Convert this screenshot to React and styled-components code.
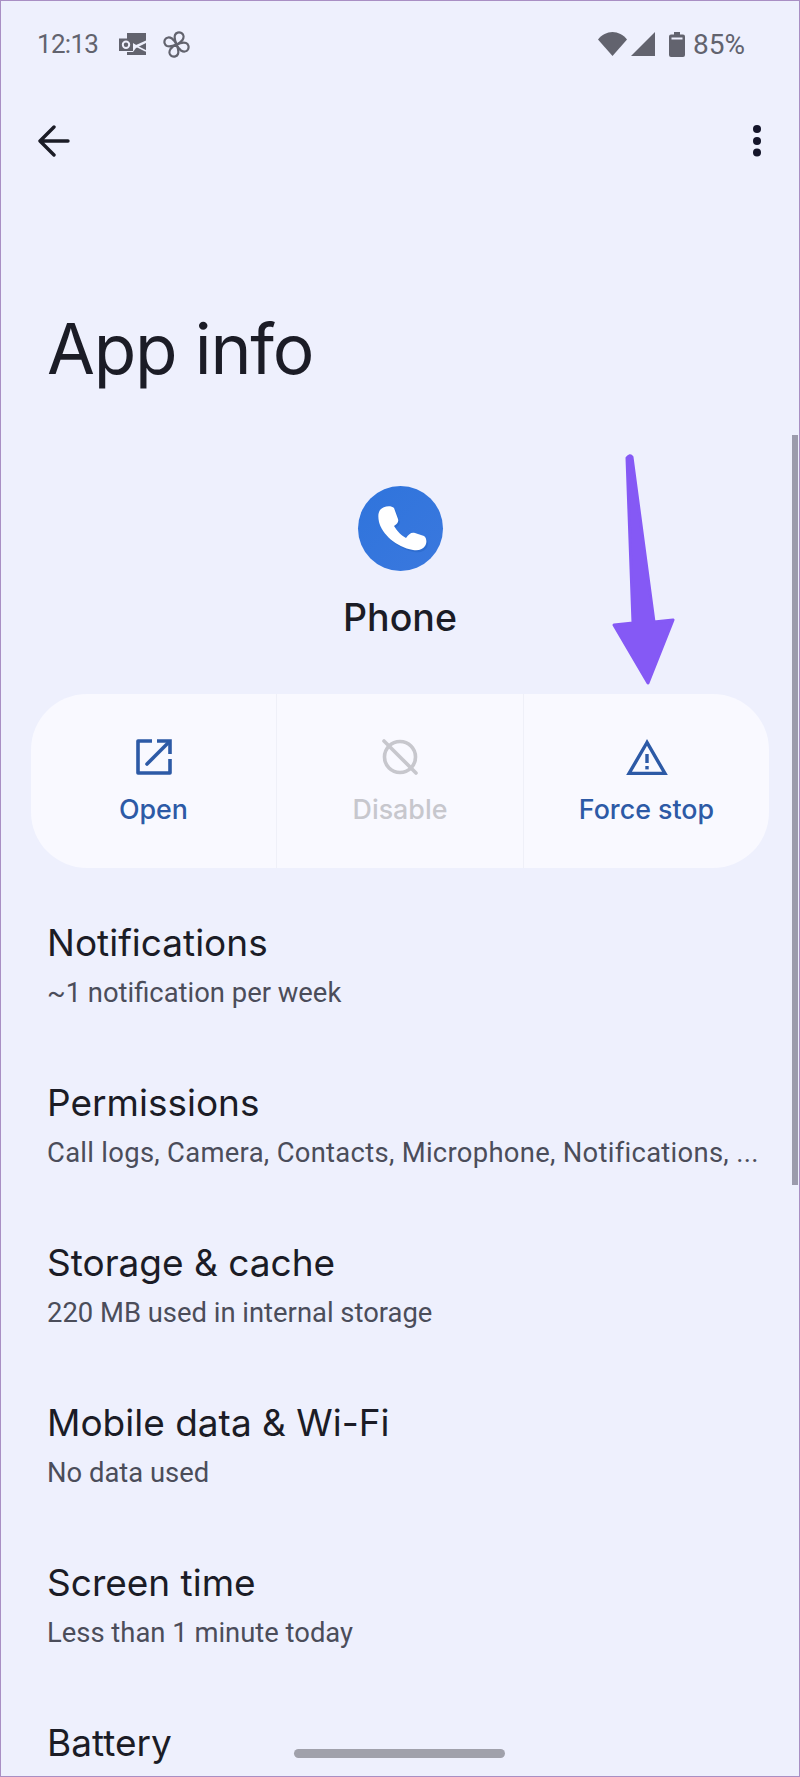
import React from "react";
import styled, { createGlobalStyle } from "styled-components";

const GlobalStyle = createGlobalStyle`
  html, body {
    margin: 0;
    padding: 0;
    background: #eef0fd;
  }
  * {
    box-sizing: border-box;
  }
`;

const Page = styled.div`
  position: relative;
  width: 800px;
  height: 1777px;
  overflow: hidden;
  background: #eef0fd;
  font-family: Roboto, "Liberation Sans", sans-serif;
  color: #1b1c26;
`;

const Frame = styled.div`
  position: absolute;
  inset: 0;
  border: 1.5px solid #a98fc4;
  pointer-events: none;
`;

const StatusBar = styled.div`
  height: 88px;
  padding: 0 55px 0 37px;
  display: flex;
  align-items: center;
  justify-content: space-between;
  color: #62636e;
`;

const StatusGroup = styled.div`
  display: flex;
  align-items: center;
  gap: ${(p) => p.$gap}px;
  margin-left: ${(p) => p.$offset || 0}px;
`;

const Time = styled.span`
  margin-right: 5px;
  font-size: 26px;
  letter-spacing: -0.7px;
`;

const Percent = styled.span`
  font-size: 28px;
`;

const Toolbar = styled.div`
  height: 106px;
  padding: 0 38px 0 38px;
  display: flex;
  align-items: center;
  justify-content: space-between;
`;

const Title = styled.h1`
  margin: 0;
  padding: 115px 0 0 47px;
  height: 292px;
  font-family: Inter, Roboto, sans-serif;
  font-size: 69.500px;
  font-weight: 400;
  letter-spacing: -1.2px;
  line-height: 80px;
`;

const AppHead = styled.div`
  display: flex;
  flex-direction: column;
  align-items: center;
  height: 208px;
`;

const AppIcon = styled.div`
  width: 85px;
  height: 85px;
  border-radius: 50%;
  background: linear-gradient(135deg, #2f74dc, #3a78de);
  overflow: hidden;
`;

const AppName = styled.div`
  margin-top: 22px;
  font-family: Inter, Roboto, sans-serif;
  font-size: 37.500px;
  font-weight: 500;
  line-height: 50px;
`;

const ActionCard = styled.div`
  margin: 0 31px;
  height: 174px;
  border-radius: 56px;
  background: #f9f9ff;
  display: grid;
  grid-template-columns: 245px 247px 246px;
`;

const Action = styled.div`
  display: flex;
  flex-direction: column;
  align-items: center;
  padding-top: 44px;
  color: ${(p) => (p.$disabled ? "#c7c7cd" : "#2d5aa6")};
  border-left: ${(p) => (p.$divided ? "1px solid #eff0f8" : "none")};
`;

const ActionIcon = styled.div`
  height: 38px;
  display: flex;
  align-items: center;
  justify-content: center;
`;

const ActionLabel = styled.div`
  margin-top: 13px;
  font-family: Inter, Roboto, sans-serif;
  font-size: 26.800px;
  font-weight: 500;
  line-height: 40px;
`;

const List = styled.div`
  margin-top: 20px;
`;

const Row = styled.div`
  height: 160px;
  padding: 31px 47px 0;
`;

const RowTitle = styled.div`
  font-family: Inter, Roboto, sans-serif;
  font-size: 37px;
  line-height: 48px;
`;

const RowSub = styled.div`
  font-size: 27.400px;
  line-height: 52px;
  letter-spacing: ${(p) => (p.$long ? "0.3px" : "0")};
  color: #4b4d5a;
  white-space: nowrap;
`;

const Scrollbar = styled.div`
  position: absolute;
  top: 435px;
  right: 2px;
  width: 6px;
  height: 750px;
  background: #9b9bac;
`;

const HomeBar = styled.div`
  position: absolute;
  left: 294px;
  top: 1749px;
  width: 211px;
  height: 9px;
  border-radius: 5px;
  background: #a0a1ab;
`;

const ArrowMark = styled.svg`
  position: absolute;
  left: 600px;
  top: 445px;
`;

const rows = [
  ["Notifications", "~1 notification per week"],
  ["Permissions", "Call logs, Camera, Contacts, Microphone, Notifications, ...", true],
  ["Storage & cache", "220 MB used in internal storage"],
  ["Mobile data & Wi-Fi", "No data used"],
  ["Screen time", "Less than 1 minute today"],
  ["Battery", ""],
];

function OutlookIcon() {
  return (
    <svg width="28" height="23" viewBox="0 0 28 23" fill="#62636e">
      <path d="M8 0h19v7.500L17 12 8 6z" />
      <path d="M27 10v12H8v-3h6l3-4z" />
      <path d="M0 5.500h14V18H0z" />
      <circle cx="7" cy="11.700" r="3.200" fill="none" stroke="#eef0fd" strokeWidth="2" />
      <path d="M15 12l12 6" stroke="#eef0fd" strokeWidth="1.500" />
    </svg>
  );
}

const petal = "M13.500 13.500C12 10 11 7 12 4C13 1.500 16 .8 18.500 2C21 3.500 21 6.500 19.500 9C18 11 16 12.500 13.500 13.500Z";

function PinwheelIcon() {
  return (
    <svg width="27" height="27" viewBox="0 0 27 27" fill="none" stroke="#62636e" strokeWidth="2.200" strokeLinejoin="round">
      {[0, 90, 180, 270].map((angle) => (
        <path key={angle} d={petal} transform={`rotate(${angle} 13.500 13.500)`} />
      ))}
    </svg>
  );
}

function WifiIcon() {
  return (
    <svg width="29" height="24" viewBox="0 0 29 24" fill="#62636e">
      <path d="M0 7.500C3.800 2.800 9 0 14.500 0S25.200 2.800 29 7.500L14.500 24z" />
    </svg>
  );
}

function SignalIcon() {
  return (
    <svg width="24" height="24" viewBox="0 0 24 24" fill="#62636e">
      <path d="M24 0v24H0z" />
    </svg>
  );
}

function BatteryIcon() {
  return (
    <svg width="16" height="25" viewBox="0 0 16 25" fill="#62636e">
      <path d="M5 0h6v2.500h3a2 2 0 0 1 2 2V23a2 2 0 0 1-2 2H2a2 2 0 0 1-2-2V4.500a2 2 0 0 1 2-2h3z" />
      <rect x="2.500" y="5.500" width="11" height="2" fill="#eef0fd" />
    </svg>
  );
}

function BackIcon() {
  return (
    <svg width="32" height="32" viewBox="0 0 32 32" fill="none" stroke="#1b1c26" strokeWidth="3.400" strokeLinecap="round" strokeLinejoin="round">
      <path d="M30 16H3M16 2L2 16l14 14" />
    </svg>
  );
}

function MoreIcon() {
  return (
    <svg width="10" height="34" viewBox="0 0 10 34" fill="#14152a">
      <circle cx="5" cy="5" r="4" />
      <circle cx="5" cy="17" r="4" />
      <circle cx="5" cy="28.500" r="4" />
    </svg>
  );
}

const handset =
  "M22 24C25 20 33 19 36 22L40 33C41 36 39 38 36 40C39 45 44 50 48 52C51 48 53 46 57 47L66 50C69 52 69 57 67 60C65 63 61 65 55 64C38 61 24 48 21 36C20 31 20 27 22 24Z";

function PhoneGlyph() {
  return (
    <svg width="85" height="85" viewBox="0 0 85 85">
      <path d={handset} fill="#1f5bb8" opacity="0.35" transform="translate(1.500 2)" />
      <path d={handset} fill="#fff" />
    </svg>
  );
}

function OpenIcon() {
  return (
    <svg width="36" height="36" viewBox="0 0 36 36" fill="none" stroke="currentColor" strokeWidth="3.600">
      <path d="M16 2H2v32h32V20" strokeLinejoin="round" />
      <path d="M21 2h13v13" />
      <path d="M33 3L11 25" strokeLinecap="round" />
    </svg>
  );
}

function DisableIcon() {
  return (
    <svg width="38" height="38" viewBox="0 0 38 38" fill="none" stroke="currentColor" strokeWidth="3.600" strokeLinecap="round">
      <circle cx="19" cy="19" r="15.500" />
      <path d="M3 3l32 32" />
    </svg>
  );
}

function WarningIcon() {
  return (
    <svg width="42" height="36" viewBox="0 0 42 36" fill="currentColor">
      <path d="M21 3.500L3 34.500h36z" fill="none" stroke="currentColor" strokeWidth="3.400" />
      <rect x="19.300" y="15" width="3.400" height="9" />
      <rect x="19.300" y="27" width="3.400" height="3.400" />
    </svg>
  );
}

export default function App() {
  return (
    <Page>
      <GlobalStyle />
      <StatusBar>
        <StatusGroup $gap={16}>
          <Time>12:13</Time>
          <OutlookIcon />
          <PinwheelIcon />
        </StatusGroup>
        <StatusGroup $gap={4}>
          <WifiIcon />
          <SignalIcon />
          <StatusGroup $gap={8} $offset={10}>
            <BatteryIcon />
            <Percent>85%</Percent>
          </StatusGroup>
        </StatusGroup>
      </StatusBar>
      <Toolbar>
        <BackIcon />
        <MoreIcon />
      </Toolbar>
      <Title>App info</Title>
      <AppHead>
        <AppIcon>
          <PhoneGlyph />
        </AppIcon>
        <AppName>Phone</AppName>
      </AppHead>
      <ActionCard>
        <Action>
          <ActionIcon>
            <OpenIcon />
          </ActionIcon>
          <ActionLabel>Open</ActionLabel>
        </Action>
        <Action $disabled $divided>
          <ActionIcon>
            <DisableIcon />
          </ActionIcon>
          <ActionLabel>Disable</ActionLabel>
        </Action>
        <Action $divided>
          <ActionIcon>
            <WarningIcon />
          </ActionIcon>
          <ActionLabel>Force stop</ActionLabel>
        </Action>
      </ActionCard>
      <List>
        {rows.map(([title, sub, long]) => (
          <Row key={title}>
            <RowTitle>{title}</RowTitle>
            {sub && <RowSub $long={long}>{sub}</RowSub>}
          </Row>
        ))}
      </List>
      <ArrowMark width="90" height="250" viewBox="0 0 90 250">
        <path
          d="M27 13L33 178L14 180L48 238L73 175L54 177L32 12Q30 9 27 13Z"
          fill="#8559f5"
          stroke="#8559f5"
          strokeWidth="3"
          strokeLinejoin="round"
        />
      </ArrowMark>
      <Scrollbar />
      <HomeBar />
      <Frame />
    </Page>
  );
}
